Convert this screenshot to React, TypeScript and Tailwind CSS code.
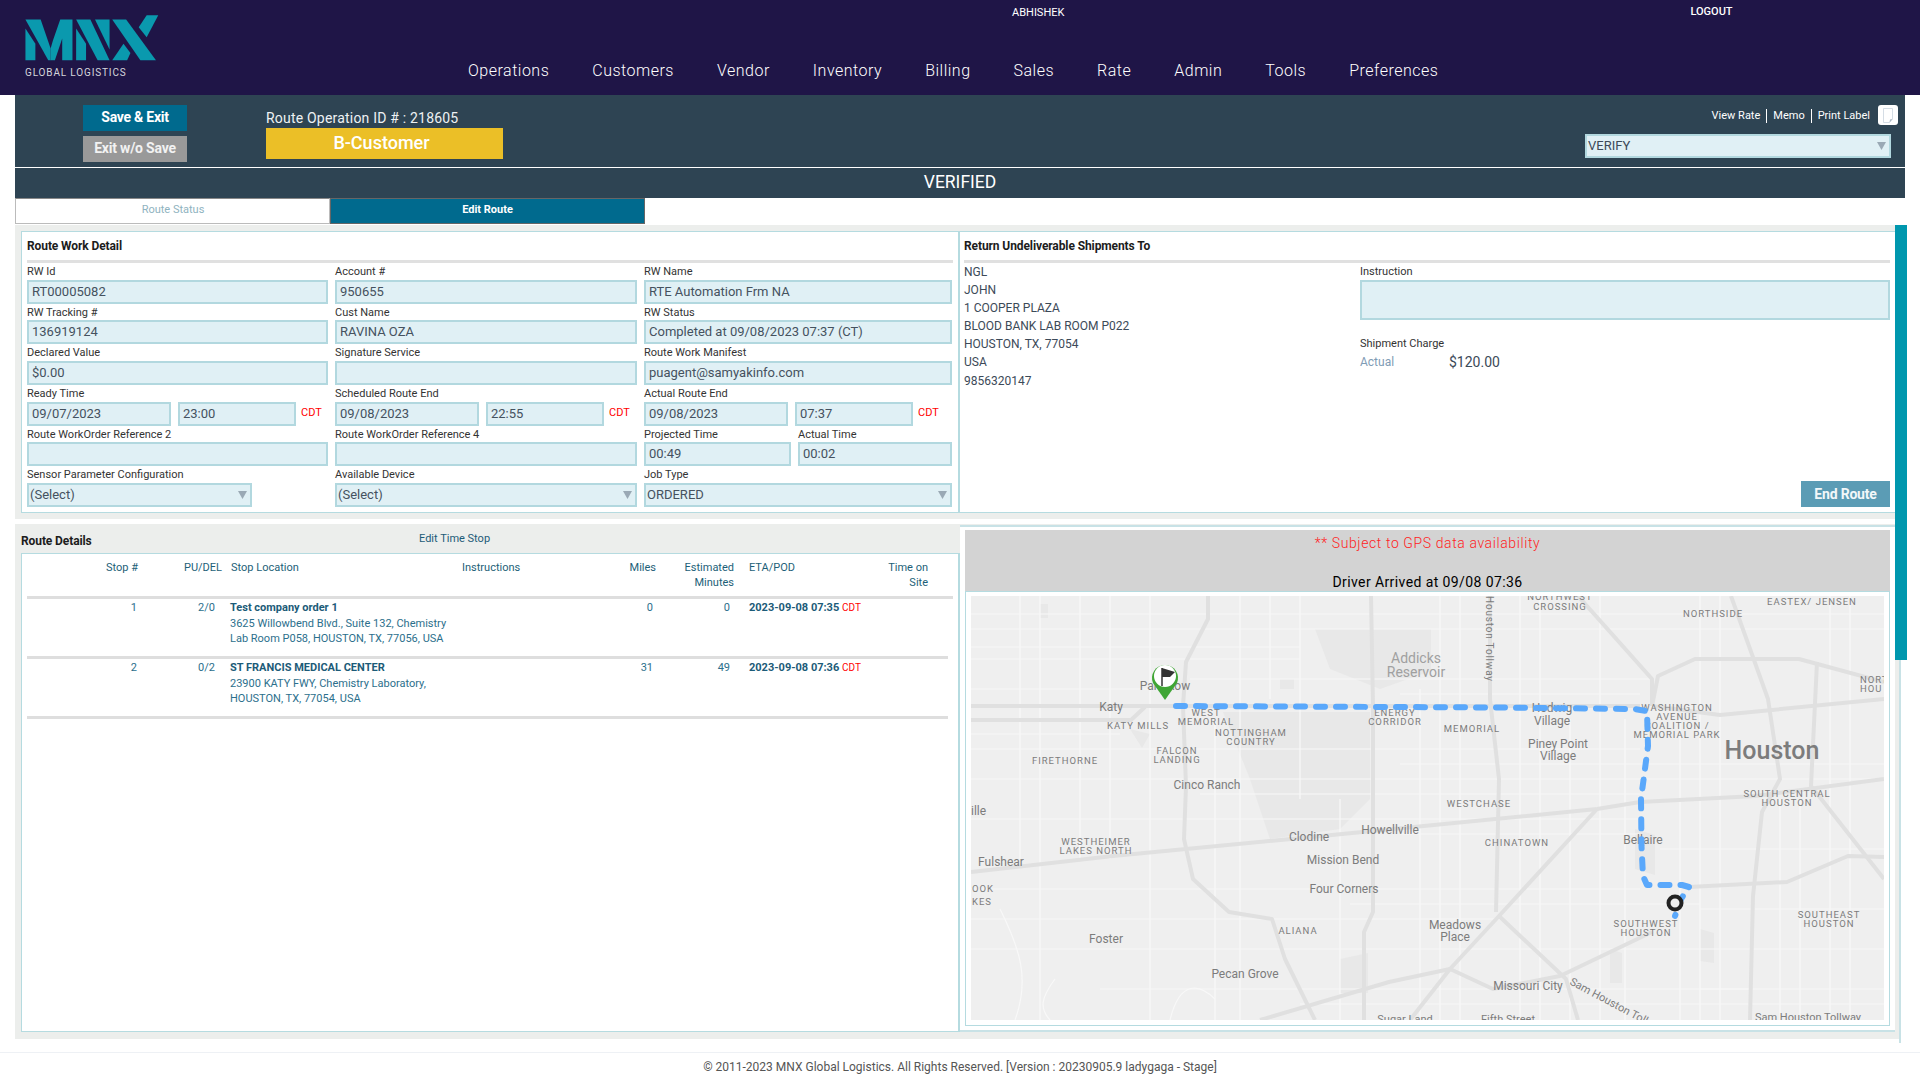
const navItems = ['Operations', 'Customers', 'Vendor', 'Inventory', 'Billing', 'Sales', 'Rate', 'Admin', 'Tools', 'Preferences'];

const addressLines = ['NGL', 'JOHN', '1 COOPER PLAZA', 'BLOOD BANK LAB ROOM P022', 'HOUSTON, TX, 77054', 'USA', '9856320147'];

const inputClass = 'block h-6 w-full min-w-0 border-2 border-[#b2d8df] bg-[#e0f0f5] pb-px pl-[3px] text-[13px] text-[#45525f] outline-none';

function Label({ text }: { text: string }) {
  return <div className="flex h-[16.67px] items-center whitespace-nowrap pt-[2px] text-[11px] text-[#333]">{text}</div>;
}

function TextInput({ value = '', className = '' }: { value?: string; className?: string }) {
  return <input readOnly value={value} className={`${inputClass} ${className}`} />;
}

function Field({ label, value }: { label: string; value?: string }) {
  return (
    <div>
      <Label text={label} />
      <TextInput value={value} />
    </div>
  );
}

function Arrow() {
  return (
    <svg width="9" height="8" viewBox="0 0 9 8" className="mt-px shrink-0">
      <path d="M0 0H9L4.5 8Z" fill="#9aa9b5" />
    </svg>
  );
}

function SelectBox({ value, className = '' }: { value: string; className?: string }) {
  return (
    <div className={`flex h-6 items-center justify-between border-2 border-[#b2d8df] bg-[#e0f0f5] pb-px pl-px pr-[3px] text-[13px] text-[#45525f] ${className}`}>
      <span>{value}</span>
      <Arrow />
    </div>
  );
}

function DateField({ label, date, time }: { label: string; date: string; time: string }) {
  return (
    <div>
      <Label text={label} />
      <div className="flex items-center gap-[7px]">
        <TextInput value={date} className="!w-[144px]" />
        <TextInput value={time} className="!w-[118px]" />
        <span className="ml-[-2px] text-[11px] text-[#f00]">CDT</span>
      </div>
    </div>
  );
}

function Logo() {
  return (
    <svg width="160" height="53" viewBox="0 0 480 160" className="block">
      <g fill="#0a99ae">
        <path d="M30 62L60 108V158H30Z" />
        <path d="M30 35H76L106 122V158H99Z" />
        <path d="M113 98L135 35H172V158H141V92L119 158H106V122Z" />
        <path d="M183 62L213 108V158H183Z" />
        <path d="M183 35H226L284 158H248Z" />
        <path d="M240 35H284V125Z" />
        <path d="M292 35H334L424 158H377Z" />
        <path d="M372 58L396 22H431L396 88Z" />
        <path d="M292 158L326 108L347 136L337 158Z" />
      </g>
    </svg>
  );
}

// map drawing, written in page coordinates through the viewBox
const highways = [
  'M971 707H1175H1640',
  'M971 721H1131L1145 708',
  'M1208 597V620L1186 663L1183 707L1186 787L1184 840L1193 880L1229 913L1272 920L1285 960L1315 1021',
  'M1371 597L1373 707V913L1364 933V1021',
  'M1490 597V700L1499 780L1496 913',
  'M971 873L1113 857L1291 840L1597 810L1640 803L1756 797L1884 780',
  'M1597 810L1499 917L1450 970L1410 1021',
  'M1499 917L1566 980L1578 1021',
  'M1260 1021L1389 983L1450 970L1493 990L1560 977L1652 933',
  'M1689 888L1787 883L1848 857L1884 858',
  'M1750 1021L1753 897L1762 813L1780 780L1768 700L1731 597',
  'M1652 707L1658 677L1695 660L1799 660L1884 683',
  'M1578 597L1652 680L1652 707',
  'M1817 663L1811 787L1884 880',
  'M1652 707L1720 716L1884 700',
];

const streets = [
  'M971 615H1884', 'M971 630H1884', 'M971 648H1300', 'M971 660H1300', 'M971 690H1170', 'M1190 680H1650', 'M1400 695H1640',
  'M971 735H1120', 'M971 750H1640', 'M1400 765H1884', 'M971 780H1884', 'M1200 795H1640',
  'M971 820H1640', 'M1400 835H1640', 'M971 890H1640', 'M1350 905H1700', 'M971 920H1500', 'M971 950H1884', 'M1100 990H1750', 'M1660 850H1884',
  'M1700 910H1884', 'M1700 990H1884', 'M1300 1005H1884',
  'M1020 597V860', 'M1040 597V1021', 'M1080 597V860', 'M1110 597V860', 'M1150 597V1021', 'M1215 720V1021', 'M1240 597V1021', 'M1270 597V700',
  'M1300 597V800', 'M1340 800V1021', 'M1420 690V1021', 'M1440 597V1021', 'M1460 597V1021', 'M1520 597V1021', 'M1540 597V1021', 'M1570 720V1021',
  'M1600 597V1021', 'M1625 720V1021', 'M1680 720V1021', 'M1700 597V1021', 'M1720 597V1021', 'M1780 800V1021', 'M1800 800V1021', 'M1830 597V1021',
  'M1850 597V1021', 'M1000 910C1020 950 1030 980 1015 1021', 'M1055 980C1040 1000 1040 1010 1050 1021', 'M1170 1021C1180 980 1200 985 1215 1000',
];

type MapLabel = { x: number; y: number; t: string; caps?: boolean; size?: number; start?: boolean };

const mapLabels: MapLabel[] = [
  { x: 1560, y: 601, t: 'NORTHWEST', caps: true }, { x: 1560, y: 611, t: 'CROSSING', caps: true },
  { x: 1812, y: 606, t: 'EASTEX/ JENSEN', caps: true }, { x: 1713, y: 618, t: 'NORTHSIDE', caps: true },
  { x: 1206, y: 717, t: 'WEST', caps: true }, { x: 1206, y: 726, t: 'MEMORIAL', caps: true },
  { x: 1395, y: 717, t: 'ENERGY', caps: true }, { x: 1395, y: 726, t: 'CORRIDOR', caps: true },
  { x: 1138, y: 730, t: 'KATY MILLS', caps: true },
  { x: 1251, y: 737, t: 'NOTTINGHAM', caps: true }, { x: 1251, y: 746, t: 'COUNTRY', caps: true },
  { x: 1472, y: 733, t: 'MEMORIAL', caps: true },
  { x: 1677, y: 712, t: 'WASHINGTON', caps: true }, { x: 1677, y: 721, t: 'AVENUE', caps: true },
  { x: 1677, y: 730, t: 'COALITION /', caps: true }, { x: 1677, y: 739, t: 'MEMORIAL PARK', caps: true },
  { x: 1177, y: 755, t: 'FALCON', caps: true }, { x: 1177, y: 764, t: 'LANDING', caps: true },
  { x: 1065, y: 765, t: 'FIRETHORNE', caps: true },
  { x: 1787, y: 798, t: 'SOUTH CENTRAL', caps: true }, { x: 1787, y: 807, t: 'HOUSTON', caps: true },
  { x: 1479, y: 808, t: 'WESTCHASE', caps: true }, { x: 1517, y: 847, t: 'CHINATOWN', caps: true },
  { x: 1096, y: 846, t: 'WESTHEIMER', caps: true }, { x: 1096, y: 855, t: 'LAKES NORTH', caps: true },
  { x: 1646, y: 928, t: 'SOUTHWEST', caps: true }, { x: 1646, y: 937, t: 'HOUSTON', caps: true },
  { x: 1829, y: 919, t: 'SOUTHEAST', caps: true }, { x: 1829, y: 928, t: 'HOUSTON', caps: true },
  { x: 1298, y: 935, t: 'ALIANA', caps: true }, { x: 972, y: 893, t: 'OOK', caps: true, start: true },
  { x: 972, y: 906, t: 'KES', caps: true, start: true }, { x: 1860, y: 684, t: 'NORT', caps: true, start: true },
  { x: 1860, y: 693, t: 'HOU', caps: true, start: true },
  { x: 1111, y: 712, t: 'Katy' }, { x: 1165, y: 691, t: 'Park Row' },
  { x: 1416, y: 664, t: 'Addicks', size: 14 }, { x: 1416, y: 678, t: 'Reservoir', size: 14 },
  { x: 1552, y: 713, t: 'Hedwig' }, { x: 1552, y: 726, t: 'Village' },
  { x: 1558, y: 749, t: 'Piney Point' }, { x: 1558, y: 761, t: 'Village' },
  { x: 1772, y: 760, t: 'Houston', size: 25 }, { x: 1207, y: 790, t: 'Cinco Ranch' },
  { x: 971, y: 816, t: 'ille', start: true }, { x: 1309, y: 842, t: 'Clodine' }, { x: 1390, y: 835, t: 'Howellville' },
  { x: 1643, y: 845, t: 'Bellaire' }, { x: 1001, y: 867, t: 'Fulshear' }, { x: 1343, y: 865, t: 'Mission Bend' },
  { x: 1344, y: 894, t: 'Four Corners' }, { x: 1106, y: 944, t: 'Foster' },
  { x: 1455, y: 930, t: 'Meadows' }, { x: 1455, y: 942, t: 'Place' }, { x: 1245, y: 979, t: 'Pecan Grove' },
  { x: 1528, y: 991, t: 'Missouri City' }, { x: 1405, y: 1024, t: 'Sugar Land', size: 11 }, { x: 1508, y: 1024, t: 'Fifth Street', size: 11 },
  { x: 1808, y: 1022, t: 'Sam Houston Tollway', size: 11 },
];

function RouteMap() {
  return (
    <svg viewBox="971 597 913 424" width="913" height="424" className="block bg-[#efefef]" fontFamily="Roboto, sans-serif">
      <g fill="#e8e8e8">
        <path d="M1315 630H1431V672L1380 690L1330 670Z" />
        <path d="M1223 713H1370V800L1340 830L1270 840L1250 780Z" />
        <path d="M1040 605h8v14h-8ZM1280 680h14v10h-14ZM1130 730l20 5-8 14ZM1635 830l20 6v40l-20-6ZM1700 930l14 4v30l-14-2ZM1340 960l28-6v40h-28ZM1610 950l12 4v30h-12Z" />
      </g>
      <g fill="none" stroke="#f8f8f8" strokeWidth="1.2">
        {streets.map(d => <path key={d} d={d} />)}
      </g>
      <g fill="none" stroke="#e0e0e0" strokeWidth="4" strokeLinejoin="round">
        {highways.map(d => <path key={d} d={d} />)}
      </g>
      <g fontSize="12" fill="#7c7c7c" textAnchor="middle">
        {mapLabels.map(l => (
          <text
            key={`${l.t}-${l.x}-${l.y}`}
            x={l.x}
            y={l.y}
            textAnchor={l.start ? 'start' : 'middle'}
            fontSize={l.caps ? 9.5 : l.size ?? 12}
            letterSpacing={l.caps ? 1 : 0}
            fontWeight={l.size === 25 ? 500 : 400}
            fill={l.size === 14 ? '#a0a0a0' : '#7c7c7c'}
          >
            {l.t}
          </text>
        ))}
        <text transform="translate(1486 597) rotate(90)" fontSize="10" textAnchor="start" letterSpacing="0.8">Houston Tollway</text>
        <text transform="translate(1569 985) rotate(28)" fontSize="11" textAnchor="start">Sam Houston Tollway</text>
      </g>
      <path
        d="M1176 707L1500 708.5L1634 710L1647 712L1648 747L1641 800L1641.5 847L1643 877L1647 886L1682 886L1689 888L1681 900L1675 917"
        fill="none"
        stroke="#5aa8fb"
        strokeWidth="6"
        strokeLinecap="round"
        strokeLinejoin="round"
        strokeDasharray="9 11"
      />
      <path d="M1165 701L1153 684A13 13 0 1 1 1177 684Z" fill="#3fa535" />
      <circle cx="1165" cy="677" r="11" fill="#fff" />
      <path d="M1162 669V687" stroke="#333" strokeWidth="1.5" />
      <path d="M1162 669L1175 673L1170 678H1162Z" fill="#333" />
      <circle cx="1675" cy="904" r="6.5" fill="#efefef" stroke="#222" strokeWidth="4" />
    </svg>
  );
}

function RouteRow({ stop, pu, name, line1, line2, miles, minutes, eta }: { stop: string; pu: string; name: string; line1: string; line2: string; miles: string; minutes: string; eta: string }) {
  return (
    <>
      <div className="grid h-[57px] grid-cols-[116px_84px_232px_146px_56px_78px_146px] pt-px text-[11px] leading-[15.5px] text-[#2c6f8c]">
        <div className="pr-px text-right">{stop}</div>
        <div className="pr-[7px] text-right">{pu}</div>
        <div className="whitespace-nowrap pl-[8px]">
          <div className="font-bold text-[#1c5b78]">{name}</div>
          <div>{line1}</div>
          <div>{line2}</div>
        </div>
        <div />
        <div className="pr-[3px] text-right">{miles}</div>
        <div className="pr-1 text-right">{minutes}</div>
        <div className="whitespace-nowrap pl-[15px] font-bold text-[#1c5b78]">
          {eta} <span className="text-[10px] font-normal text-[#f00]">CDT</span>
        </div>
      </div>
      <div className="ml-[5px] h-[3px] w-[921px] bg-[#dedede]" />
    </>
  );
}

export default function App() {
  return (
    <div className="h-[1080px] overflow-hidden bg-white font-[Roboto,sans-serif]">
      <header className="flex h-[95px] bg-[#1f1547] text-white">
        <div className="w-[468px] pl-[15px] pt-2">
          <Logo />
          <div className="ml-[10px] mt-[6px] text-[10px] leading-[12px] tracking-[0.85px] text-[#d5d5dc]">GLOBAL LOGISTICS</div>
        </div>
        <div className="flex-1">
          <div className="flex h-[25px] items-center text-[11px]">
            <span className="ml-[544px] mt-px">ABHISHEK</span>
            <span className="ml-[626px] font-medium">LOGOUT</span>
          </div>
          <nav className="mt-[34px] flex gap-[43px] text-[16px] font-light leading-[24px] tracking-[0.5px] text-white">
            {navItems.map(item => <span key={item}>{item}</span>)}
          </nav>
        </div>
      </header>

      <div className="px-[15px]">
        <div className="flex h-[72px] bg-[#2e4453] text-white">
          <div className="flex w-[172px] flex-col gap-[5px] pl-[68px] pt-[10px]">
            <button className="h-[26px] w-[104px] bg-[#006a8e] pb-px text-[14px] font-bold tracking-[-0.25px] text-white">Save &amp; Exit</button>
            <button className="h-[26px] w-[104px] bg-[#999999] pb-px text-[14px] font-bold tracking-[-0.2px] text-[#f2f2f2]">Exit w/o Save</button>
          </div>
          <div className="ml-[79px] pt-[13px]">
            <div className="text-[14px] leading-[20px] tracking-[0.2px] text-[#eef2f4]">Route Operation ID # : 218605</div>
            <div className="flex h-[31px] w-[237px] items-center justify-center bg-[#ebbf27] pb-[2px] pr-[6px] text-[18px] font-medium text-white">B-Customer</div>
          </div>
          <div className="ml-auto flex w-[320px] flex-col items-end">
            <div className="mt-[10px] flex h-[20px] items-center pr-[7px] text-[11px] text-white">
              <div className="mt-[2px] flex items-center">
                <span>View Rate</span>
                <span className="mx-[6px] h-[14px] w-px bg-white" />
                <span>Memo</span>
                <span className="mx-[6px] h-[14px] w-px bg-white" />
                <span>Print Label</span>
              </div>
              <span className="ml-2 flex h-5 w-5 items-center justify-center rounded-[3px] bg-white">
                <svg width="10" height="15" viewBox="0 0 10 15">
                  <path d="M0.5 0.5H9.5V11L6.5 14.5H0.5Z" fill="#fff" stroke="#d5dde5" />
                  <path d="M6.5 14.5L7 11.5L9.5 11Z" fill="#aab6c2" />
                </svg>
              </span>
            </div>
            <SelectBox value="VERIFY" className="mr-[14px] mt-[9px] w-[306px] !text-[#3c4a58]" />
          </div>
        </div>
        <div className="h-px bg-white" />
        <div className="flex h-[30px] items-center justify-center bg-[#2e4453] pb-[2px] text-[17.5px] text-white">VERIFIED</div>
        <div className="mb-px flex h-[26px] text-[11px]">
          <div className="flex w-[315px] items-center justify-center border border-x-[#bbb] border-b-[#bbb] border-t-[#888] bg-white pb-[2px] pl-px text-[#8fb3c0]">Route Status</div>
          <div className="flex w-[315px] items-center justify-center border border-[#666] bg-[#006a8e] pb-[2px] font-bold text-white">Edit Route</div>
        </div>

        <div className="relative w-[1886px] border-r-2 border-[#c8e2e6] pb-[4px]">
          <div className="absolute left-[1880px] top-0 h-[435px] w-3 bg-[#0097ae]" />

          <div className="flex h-[294px] bg-[#eceeec] pl-[6px] pt-[6px]">
            <section className="h-[282px] w-[939px] border border-r-2 border-[#b5dbe0] bg-white pl-[5px] pr-[5px]">
              <div className="flex h-[28px] items-center text-[12px] font-bold tracking-[-0.1px] text-[#1c1c1c]">Route Work Detail</div>
              <div className="h-[3px] bg-[#e0e0e0]" />
              <div className="grid grid-cols-[301px_302px_308px] gap-x-[7px]">
                <Field label="RW Id" value="RT00005082" />
                <Field label="Account #" value="950655" />
                <Field label="RW Name" value="RTE Automation Frm NA" />
                <Field label="RW Tracking #" value="136919124" />
                <Field label="Cust Name" value="RAVINA OZA" />
                <Field label="RW Status" value="Completed at 09/08/2023 07:37 (CT)" />
                <Field label="Declared Value" value="$0.00" />
                <Field label="Signature Service" />
                <Field label="Route Work Manifest" value="puagent@samyakinfo.com" />
                <DateField label="Ready Time" date="09/07/2023" time="23:00" />
                <DateField label="Scheduled Route End" date="09/08/2023" time="22:55" />
                <DateField label="Actual Route End" date="09/08/2023" time="07:37" />
                <Field label="Route WorkOrder Reference 2" />
                <Field label="Route WorkOrder Reference 4" />
                <div className="grid grid-cols-[147px_154px] gap-x-[7px]">
                  <Field label="Projected Time" value="00:49" />
                  <Field label="Actual Time" value="00:02" />
                </div>
                <div>
                  <Label text="Sensor Parameter Configuration" />
                  <SelectBox value="(Select)" className="w-[225px]" />
                </div>
                <div>
                  <Label text="Available Device" />
                  <SelectBox value="(Select)" />
                </div>
                <div>
                  <Label text="Job Type" />
                  <SelectBox value="ORDERED" />
                </div>
              </div>
            </section>

            <section className="flex h-[282px] w-[935px] flex-col border-y border-[#b5dbe0] bg-white pl-[4px] pr-[5px]">
              <div className="flex h-[28px] items-center text-[12px] font-bold tracking-[-0.1px] text-[#1c1c1c]">Return Undeliverable Shipments To</div>
              <div className="h-[3px] bg-[#e0e0e0]" />
              <div className="flex flex-1">
                <div className="w-[396px] text-[12px] leading-[18.1px] text-[#3c4a58]">
                  {addressLines.map(line => <div key={line}>{line}</div>)}
                </div>
                <div className="flex flex-1 flex-col">
                  <Label text="Instruction" />
                  <div className="h-[40px] border-2 border-[#b2d8df] bg-[#e0f0f5]" />
                  <div className="mt-[15px] text-[11px] leading-[17px] text-[#333]">Shipment Charge</div>
                  <div className="mt-[1px] flex items-center">
                    <span className="w-[89px] text-[12px] leading-[18px] text-[#7f9cb5]">Actual</span>
                    <span className="text-[14px] leading-[18px] text-[#3c4a58]">$120.00</span>
                  </div>
                  <button className="mb-[5px] ml-auto mt-auto h-[26px] w-[89px] bg-[#5b9cb5] text-[14px] font-bold tracking-[-0.2px] text-[#f2f7f9]">End Route</button>
                </div>
              </div>
            </section>
          </div>

          <div className="mt-[5px] flex h-[515px] items-start bg-[#eceeec] pl-[6px]">
            <div className="w-[939px]">
              <div className="flex h-[29px] items-center">
                <span className="w-[398px] pt-[4px] text-[12px] font-bold tracking-[-0.1px] text-[#1c1c1c]">Route Details</span>
                <span className="pt-[2px] text-[11px] text-[#1c5b78]">Edit Time Stop</span>
              </div>
              <section className="h-[479px] border border-r-2 border-[#b5dbe0] bg-white">
                <div className="grid h-[42px] grid-cols-[116px_84px_232px_146px_56px_78px_146px_48px] pt-[6px] text-[11px] leading-[15px] text-[#1d5f78]">
                  <div className="text-right">Stop #</div>
                  <div className="text-right">PU/DEL</div>
                  <div className="pl-[9px]">Stop Location</div>
                  <div className="pl-[8px] text-left">Instructions</div>
                  <div className="text-right">Miles</div>
                  <div className="text-right">Estimated<br />Minutes</div>
                  <div className="pl-[15px]">ETA/POD</div>
                  <div className="text-right">Time on<br />Site</div>
                </div>
                <div className="ml-[5px] h-[3px] w-[926px] bg-[#dedede]" />
                <RouteRow stop="1" pu="2/0" name="Test company order 1" line1="3625 Willowbend Blvd., Suite 132, Chemistry" line2="Lab Room P058, HOUSTON, TX, 77056, USA" miles="0" minutes="0" eta="2023-09-08 07:35" />
                <RouteRow stop="2" pu="0/2" name="ST FRANCIS MEDICAL CENTER" line1="23900 KATY FWY, Chemistry Laboratory," line2="HOUSTON, TX, 77054, USA" miles="31" minutes="49" eta="2023-09-08 07:36" />
              </section>
            </div>

            <section className="mt-px h-[507px] w-[935px] border-y-2 border-[#c8e2e6] bg-white pl-[5px] pr-[5px] pt-[3px]">
              <div className="flex h-[61px] flex-col items-center bg-[#d3d3d3]">
                <div className="mt-[4px] text-[14px] font-light leading-[18px] tracking-[0.6px] text-[#f22]">** Subject to GPS data availability</div>
                <div className="mt-[21px] text-[14px] leading-[18px] tracking-[0.4px] text-black">Driver Arrived at 09/08 07:36</div>
              </div>
              <div className="h-[435px] border border-[#b5dbe0] p-[4px] pl-[5px]">
                <RouteMap />
              </div>
            </section>
          </div>
        </div>
      </div>

      <footer className="mt-[9px] flex h-[28px] items-center justify-center border-t border-[#eef1f5] text-[12px] text-[#555]">
        © 2011-2023 MNX Global Logistics. All Rights Reserved. [Version : 20230905.9 ladygaga - Stage]
      </footer>
    </div>
  );
}
